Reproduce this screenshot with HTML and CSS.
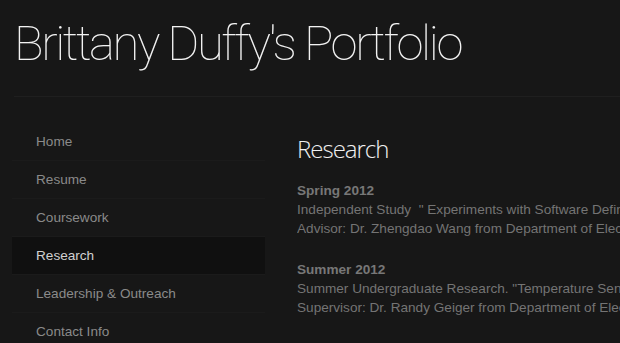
FILE: index.html
```html
<!DOCTYPE html>
<html lang="en">
<head>
    <meta charset="UTF-8">
    <title>Brittany Duffy's Portfolio - Research</title>
    <link rel="stylesheet" href="styles.css">
</head>
<body>
    <header class="site-header">
        <h1 class="site-title">Brittany Duffy's Portfolio</h1>
    </header>

    <div class="page">
        <nav class="side-nav">
            <a href="#" class="nav-item">Home</a>
            <a href="#" class="nav-item">Resume</a>
            <a href="#" class="nav-item">Coursework</a>
            <a href="#" class="nav-item active">Research</a>
            <a href="#" class="nav-item">Leadership &amp; Outreach</a>
            <a href="#" class="nav-item">Contact Info</a>
        </nav>

        <main class="content">
            <h2>Research</h2>

            <div class="entry">
                <p class="entry-term">Spring 2012</p>
                <p>Independent Study &nbsp;" Experiments with Software Defined Radio"</p>
                <p>Advisor: Dr. Zhengdao Wang from Department of Electrical and Computer Engineering</p>
            </div>

            <div class="entry">
                <p class="entry-term">Summer 2012</p>
                <p>Summer Undergraduate Research. "Temperature Sensor Design"</p>
                <p>Supervisor: Dr. Randy Geiger from Department of Electrical and Computer Engineering</p>
            </div>
        </main>
    </div>
</body>
</html>
```

FILE: styles.css
```css
/* Tema scuro del portfolio */
body {
    margin: 0;
    background-color: #171717;
    color: #747474;
    font-family: 'Liberation Sans', Arial, sans-serif;
    font-size: 13.6px;
    overflow: hidden;
}

.site-header {
    margin: 0 0 0 14px;
    height: 96px;
    border-bottom: 1px solid #1f1f1f;
}

.site-title {
    margin: 0;
    padding-top: 14px;
    font-family: 'Roboto', sans-serif;
    font-weight: 100;
    font-size: 49px;
    line-height: 60px;
    color: #f2f2f2;
    letter-spacing: -2.4px;
    white-space: nowrap;
}

.page {
    display: flex;
    padding-top: 26px;
}

.side-nav {
    width: 253px;
    margin-left: 12px;
    flex-shrink: 0;
    display: flex;
    flex-direction: column;
}

.nav-item {
    display: block;
    height: 37px;
    line-height: 38px;
    padding-left: 24px;
    color: #8a8a8a;
    text-decoration: none;
    border-bottom: 1px solid #1b1b1b;
    white-space: nowrap;
}

.nav-item.active {
    background-color: #101010;
    color: #d0d0d0;
}

/* il contenuto esce dal bordo destro come nello screenshot */
.content {
    margin-left: 32px;
    min-width: 0;
    overflow: hidden;
    white-space: nowrap;
}

.content h2 {
    margin: 11px 0 17px;
    font-family: 'Open Sans', sans-serif;
    font-weight: 300;
    font-size: 24px;
    line-height: 30px;
    letter-spacing: -1px;
    color: #f0f0f0;
}

.entry {
    margin-bottom: 22px;
}

.entry p {
    margin: 0;
    line-height: 19px;
}

.entry .entry-term {
    font-weight: bold;
    color: #777;
}
```
